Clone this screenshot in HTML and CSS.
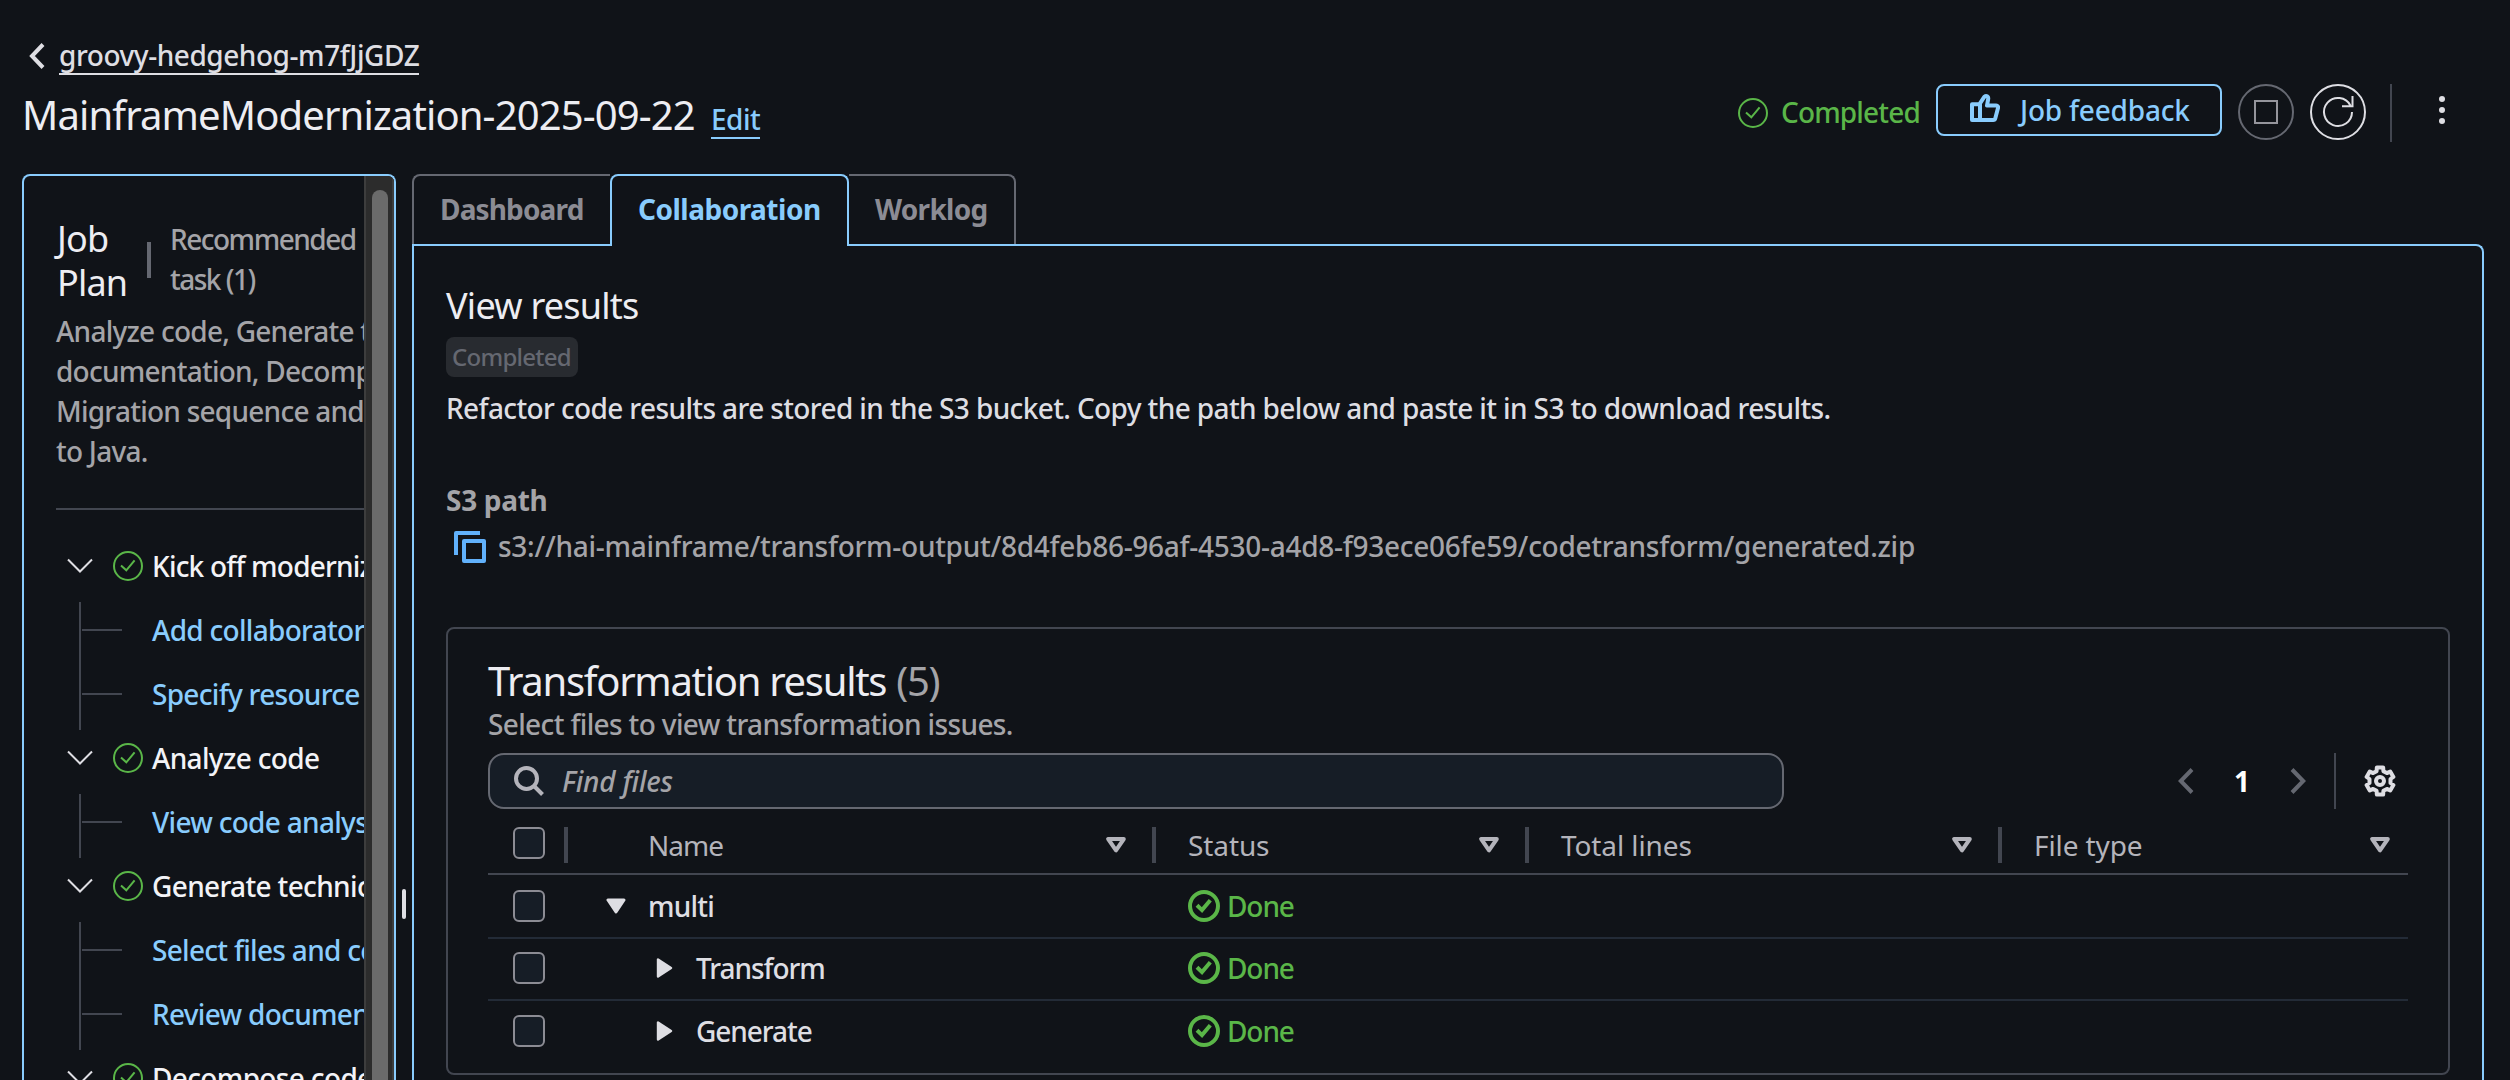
FILE: index.html
```
<!DOCTYPE html>
<html lang="en">
<head>
<meta charset="utf-8">
<title>MainframeModernization-2025-09-22</title>
<link rel="stylesheet" href="styles.css">
</head>
<body>
<svg class="defs" width="0" height="0">
  <symbol id="check-thin" viewBox="0 0 30 30"><circle cx="15" cy="15" r="14" fill="none" stroke="currentColor" stroke-width="2"/><path d="M8 14.5l5.3 4.8L21.6 9.3" fill="none" stroke="currentColor" stroke-width="2"/></symbol>
  <symbol id="check-bold" viewBox="0 0 32 32"><circle cx="16" cy="16" r="14" fill="none" stroke="currentColor" stroke-width="4"/><path d="M9 15.3l5 4.8L22.3 10.3" fill="none" stroke="currentColor" stroke-width="4"/></symbol>
  <symbol id="chevron-down" viewBox="0 0 26 16"><path d="M1 1.5L13 13.5L25 1.5" fill="none" stroke="currentColor" stroke-width="2"/></symbol>
  <symbol id="filter" viewBox="0 0 20 16"><path d="M2.2 2H17.8L10 13.4Z" fill="none" stroke="currentColor" stroke-width="4" stroke-linejoin="round"/></symbol>
  <symbol id="caret-down" viewBox="0 0 20 16"><path d="M2 2H18L10 14Z" fill="currentColor" stroke="currentColor" stroke-width="3" stroke-linejoin="round"/></symbol>
  <symbol id="caret-right" viewBox="0 0 18 20"><path d="M2 1.5V18.5L15 10Z" fill="currentColor" stroke="currentColor" stroke-width="2.4" stroke-linejoin="round"/></symbol>
</svg>

<header class="topbar">
  <div class="heading">
    <div class="crumb">
      <svg class="crumb-icon" viewBox="0 0 16 26"><path d="M14 1.5L3 13L14 24.5" fill="none" stroke="currentColor" stroke-width="4"/></svg>
      <a class="crumb-link">groovy-hedgehog-m7fJjGDZ</a>
    </div>
    <div class="title-row">
      <h1 class="title">MainframeModernization-2025-09-22</h1>
      <a class="edit">Edit</a>
    </div>
  </div>
  <div class="actions">
    <div class="job-status"><svg class="icon-30"><use href="#check-thin"/></svg><span>Completed</span></div>
    <button class="feedback">
      <svg class="thumb" viewBox="0 0 30 28"><path d="M2 26V10.2H9.5L14.3 2.8C16.4 1.2 18.6 2.4 18.2 4.8L17 11.6H26.2C27.7 11.6 28.4 12.8 28 14L25.3 24.2C25 25.4 24.4 26 23.2 26ZM10 10.2V26" fill="none" stroke="currentColor" stroke-width="4" stroke-linejoin="round"/></svg>
      <span>Job feedback</span>
    </button>
    <svg class="round stop" viewBox="0 0 56 56"><circle cx="28" cy="28" r="27" fill="none" stroke="#656871" stroke-width="2"/><rect x="17" y="17" width="22" height="22" fill="none" stroke="#95959c" stroke-width="2"/></svg>
    <svg class="round refresh" viewBox="0 0 56 56"><g fill="none" stroke="#dedee3" stroke-width="2"><circle cx="28" cy="28" r="27"/><path d="M42 28A14 14 0 1 1 40.4 21.5M42.5 12V22.2H32"/></g></svg>
    <span class="actions-divider"></span>
    <svg class="dots" viewBox="0 0 6 30"><g fill="#dedee3"><circle cx="3" cy="4" r="3"/><circle cx="3" cy="15" r="3"/><circle cx="3" cy="26" r="3"/></g></svg>
  </div>
</header>

<div class="workspace">
  <aside class="sidebar">
    <div class="plan">
      <div class="plan-head">
        <h2 class="plan-title">Job Plan</h2>
        <span class="plan-divider"></span>
        <span class="plan-rec">Recommended task (1)</span>
      </div>
      <p class="plan-desc">Analyze code, Generate technical<br>documentation, Decompose code,<br>Migration sequence and Refactor code<br>to Java.</p>
      <div class="plan-steps">
        <div class="step"><svg class="step-chev"><use href="#chevron-down"/></svg><svg class="icon-30 ok"><use href="#check-thin"/></svg><span class="step-name kick">Kick off modernization</span></div>
        <div class="substep"><span class="branch"></span><a>Add collaborators</a></div>
        <div class="substep"><span class="branch"></span><a>Specify resource location</a></div>
        <div class="step"><svg class="step-chev"><use href="#chevron-down"/></svg><svg class="icon-30 ok"><use href="#check-thin"/></svg><span class="step-name">Analyze code</span></div>
        <div class="substep"><span class="branch"></span><a>View code analysis</a></div>
        <div class="step"><svg class="step-chev"><use href="#chevron-down"/></svg><svg class="icon-30 ok"><use href="#check-thin"/></svg><span class="step-name">Generate technical</span></div>
        <div class="substep"><span class="branch"></span><a>Select files and configure</a></div>
        <div class="substep"><span class="branch"></span><a>Review documentation</a></div>
        <div class="step"><svg class="step-chev"><use href="#chevron-down"/></svg><svg class="icon-30 ok"><use href="#check-thin"/></svg><span class="step-name">Decompose code</span></div>
      </div>
    </div>
    <div class="scroll-track"><div class="scroll-thumb"></div></div>
  </aside>

  <div class="splitter"><span class="splitter-handle"></span></div>

  <main class="main">
    <nav class="tabs">
      <a class="tab tab-dashboard">Dashboard</a>
      <a class="tab tab-active">Collaboration</a>
      <a class="tab tab-worklog">Worklog</a>
    </nav>
    <section class="panel">
      <h2 class="panel-title">View results</h2>
      <span class="badge">Completed</span>
      <p class="note">Refactor code results are stored in the S3 bucket. Copy the path below and paste it in S3 to download results.</p>
      <h3 class="s3-label">S3 path</h3>
      <div class="s3-row">
        <svg class="copy" viewBox="0 0 32 32"><path d="M2 24V2H26" fill="none" stroke="#61b1fb" stroke-width="4" stroke-linejoin="round"/><rect x="10" y="10" width="20" height="20" fill="none" stroke="#61b1fb" stroke-width="4" stroke-linejoin="round"/></svg>
        <span class="s3-url">s3://hai-mainframe/transform-output/8d4feb86-96af-4530-a4d8-f93ece06fe59/codetransform/generated.zip</span>
      </div>

      <div class="results">
        <h2 class="results-title">Transformation results <span class="count">(5)</span></h2>
        <p class="results-desc">Select files to view transformation issues.</p>
        <div class="toolbar">
          <div class="search">
            <svg class="search-icon" viewBox="0 0 30 30"><circle cx="12.5" cy="12.5" r="10.5" fill="none" stroke="currentColor" stroke-width="4"/><path d="M20 20L28.5 28.5" stroke="currentColor" stroke-width="4"/></svg>
            <span>Find files</span>
          </div>
          <div class="pager">
            <svg class="pager-arrow" viewBox="0 0 16 26"><path d="M14 1.5L2.8 13L14 24.5" fill="none" stroke="currentColor" stroke-width="4"/></svg>
            <span class="pager-page">1</span>
            <svg class="pager-arrow" viewBox="0 0 16 26"><path d="M2 1.5L13.2 13L2 24.5" fill="none" stroke="currentColor" stroke-width="4"/></svg>
          </div>
          <span class="toolbar-divider"></span>
          <svg class="gear" viewBox="0 0 32 32"><g fill="none" stroke="currentColor" stroke-linejoin="round"><path stroke-width="4" d="M12.85 2.4H19.15L19.42 6.2L22.89 8.08L26.24 6.45L29.39 11.91L26.5 14V18L29.39 20.09L26.24 25.55L22.89 23.92L19.42 25.8L19.15 29.6H12.85L12.58 25.8L9.11 23.92L5.76 25.55L2.61 20.09L5.5 18V14L2.61 11.91L5.76 6.45L9.11 8.08L12.58 6.2Z"/><circle cx="16" cy="16" r="4" stroke-width="4"/></g></svg>
        </div>

        <div class="table">
          <div class="tr thead">
            <div class="th th-check"><span class="checkbox"></span></div>
            <div class="th th-name"><span>Name</span><svg class="filter"><use href="#filter"/></svg></div>
            <div class="th"><span>Status</span><svg class="filter"><use href="#filter"/></svg></div>
            <div class="th"><span>Total lines</span><svg class="filter"><use href="#filter"/></svg></div>
            <div class="th th-type"><span>File type</span><svg class="filter"><use href="#filter"/></svg></div>
          </div>
          <div class="tr row-first">
            <div class="cell-check"><span class="checkbox"></span></div>
            <div class="cell-name"><svg class="caret-down"><use href="#caret-down"/></svg><span class="multi">multi</span></div>
            <div class="cell-status"><svg class="icon-32"><use href="#check-bold"/></svg><span>Done</span></div>
          </div>
          <div class="tr">
            <div class="cell-check"><span class="checkbox"></span></div>
            <div class="cell-name nested"><svg class="caret-right"><use href="#caret-right"/></svg><span>Transform</span></div>
            <div class="cell-status"><svg class="icon-32"><use href="#check-bold"/></svg><span>Done</span></div>
          </div>
          <div class="tr row-last">
            <div class="cell-check"><span class="checkbox"></span></div>
            <div class="cell-name nested"><svg class="caret-right"><use href="#caret-right"/></svg><span>Generate</span></div>
            <div class="cell-status"><svg class="icon-32"><use href="#check-bold"/></svg><span>Done</span></div>
          </div>
        </div>
      </div>
    </section>
  </main>
</div>
</body>
</html>
```

FILE: styles.css
```
* { box-sizing: border-box; }
:root {
  --bg: #101318;
  --blue: #89ccfd;
  --green: #5ab648;
  --text: #dedee3;
  --bright: #ededf2;
  --muted: #a4a4a8;
  --line: #424650;
  --line-strong: #656871;
  --field: #161d26;
}
body {
  margin: 0;
  height: 1080px;
  overflow: hidden;
  display: flex;
  flex-direction: column;
  background: var(--bg);
  color: var(--text);
  font-family: "Noto Sans", "Open Sans", sans-serif;
  font-size: 28px;
  font-weight: 500;
  line-height: 40px;
  white-space: nowrap;
}
h1, h2, h3, p { margin: 0; font-weight: 400; }
svg { display: block; flex: none; }
.defs { position: absolute; }
.icon-30 { width: 30px; height: 30px; }
.icon-32 { width: 32px; height: 32px; }
.ok { color: var(--green); }

/* Top bar */
.topbar {
  height: 174px;
  flex: none;
  display: flex;
  justify-content: space-between;
  padding: 36px 65px 0 22px;
}
.crumb { display: flex; align-items: flex-start; gap: 14px; padding-left: 7px; }
.crumb-icon { width: 16px; height: 26px; margin-top: 7px; }
.crumb-link { padding-top: 1px; line-height: 36px; border-bottom: 2px solid var(--text); letter-spacing: -0.45px; }
.title-row { display: flex; align-items: baseline; margin-top: 16px; }
.title { width: 689px; font-size: 40px; line-height: 48px; letter-spacing: -0.87px; color: var(--bright); }
.edit { line-height: 36px; color: var(--blue); border-bottom: 2px solid var(--blue); letter-spacing: -0.5px; }
.actions { display: flex; align-items: flex-start; padding-top: 48px; }
.job-status {
  width: 198px;
  display: flex;
  align-items: center;
  gap: 13px;
  line-height: 56px;
  color: var(--green);
  letter-spacing: -0.85px;
}
.job-status .icon-30 { margin-top: 2px; }
.feedback {
  width: 286px;
  height: 52px;
  margin-right: 16px;
  padding: 0 0 0 32px;
  display: flex;
  align-items: center;
  gap: 20px;
  border: 2px solid var(--blue);
  border-radius: 8px;
  background: none;
  color: var(--blue);
  font: inherit;
  letter-spacing: -0.2px;
}
.thumb { width: 30px; height: 28px; margin-bottom: 4px; }
.round { width: 56px; height: 56px; }
.stop { margin-right: 16px; }
.actions-divider { width: 2px; height: 58px; margin: 0 47px 0 24px; background: var(--line); }
.dots { width: 6px; height: 30px; margin-top: 11px; }

/* Two-column workspace */
.workspace { flex: 1; min-height: 0; display: flex; padding: 0 26px 0 22px; }
.sidebar {
  width: 374px;
  flex: none;
  display: flex;
  overflow: hidden;
  border: 2px solid var(--blue);
  border-bottom: 0;
  border-radius: 8px 8px 0 0;
}
.plan { width: 340px; overflow: hidden; padding: 41px 0 0 32px; flex: none; }
.plan-head { display: flex; height: 94px; }
.plan-title { width: 91px; flex: none; font-size: 36px; line-height: 44px; padding-left: 1px; letter-spacing: -0.8px; white-space: normal; color: var(--bright); }
.plan-divider { width: 4px; height: 36px; flex: none; margin-top: 25px; background: var(--line-strong); }
.plan-rec { width: 200px; flex: none; margin: 2px 0 0 19px; white-space: normal; color: var(--muted); letter-spacing: -1.5px; }
.plan-desc { color: var(--muted); font-weight: 500; letter-spacing: -0.75px; height: 199px; border-bottom: 2px solid var(--line); }
.plan-steps { padding-top: 28px; }
.step { height: 64px; padding: 0 0 8px 11px; display: flex; align-items: center; color: #f3f3f7; letter-spacing: -0.65px; }
.step-chev { width: 26px; height: 16px; margin-right: 20px; color: var(--text); }
.step-name { margin-left: 9px; }
.kick { letter-spacing: -0.8px; }
.substep { height: 64px; margin-left: 23px; padding-bottom: 8px; display: flex; align-items: center; border-left: 2px solid var(--line); color: var(--blue); letter-spacing: -0.7px; }
.substep a { margin-left: 30px; }
.branch { flex: none; width: 40px; height: 2px; margin: 0 0 0 1px; background: var(--line); }
.scroll-track { width: 30px; flex: none; padding: 14px 4px 0 6px; background: #2c2c2c; border: solid #3d3d3d; border-width: 0 2px; }
.scroll-thumb { width: 16px; height: 1000px; border-radius: 8px 8px 0 0; background: #6b6b6b; }
.splitter { width: 16px; flex: none; padding: 715px 0 0 6px; }
.splitter-handle { display: block; width: 4px; height: 30px; border-radius: 2px; background: var(--text); }

/* Tabs and panel */
.main { flex: 1; min-width: 0; display: flex; flex-direction: column; }
.tabs { display: flex; margin-bottom: -2px; position: relative; font-weight: 700; line-height: 67px; color: #8c8c94; }
.tab { height: 70px; border-top: 2px solid var(--line-strong); }
.tab-dashboard { width: 198px; padding-left: 26px; border-left: 2px solid var(--line-strong); border-radius: 8px 0 0 0; letter-spacing: -0.85px; }
.tab-active { width: 239px; height: 72px; padding-left: 26px; border: 2px solid var(--blue); border-bottom: 0; border-radius: 8px 8px 0 0; background: var(--bg); color: var(--blue); letter-spacing: -0.5px; }
.tab-worklog { width: 167px; padding-left: 26px; border-right: 2px solid var(--line-strong); border-radius: 0 8px 0 0; letter-spacing: -0.7px; }
.panel { flex: 1; padding: 38px 32px 0; border: 2px solid var(--blue); border-bottom: 0; border-radius: 0 8px 0 0; }
.panel-title { font-size: 36px; line-height: 44px; letter-spacing: -0.75px; color: var(--bright); }
.badge { display: block; width: 132px; height: 40px; margin-top: 9px; padding-left: 6px; border-radius: 8px; background: #282b30; color: #656871; font-size: 24px; letter-spacing: -0.75px; }
.note { margin-top: 11px; font-weight: 500; letter-spacing: -0.62px; }
.s3-label { margin-top: 52px; font-size: 28px; font-weight: 700; letter-spacing: -0.3px; color: var(--muted); }
.s3-row { display: flex; margin-top: 6px; padding-left: 8px; gap: 12px; color: var(--muted); }
.copy { width: 32px; height: 32px; margin-top: 5px; }
.s3-url { letter-spacing: -0.27px; }

/* Results table */
.results { height: 448px; margin-top: 61px; padding: 28px 40px 0; border: 2px solid var(--line); border-radius: 8px; }
.results-title { font-size: 40px; line-height: 48px; letter-spacing: -1.3px; color: var(--bright); }
.count { color: var(--muted); margin-left: 1px; }
.results-desc { margin-top: -1px; color: var(--muted); font-weight: 500; letter-spacing: -0.64px; }
.toolbar { display: flex; align-items: center; height: 56px; margin-top: 9px; }
.search { width: 1296px; height: 56px; padding-left: 24px; display: flex; align-items: center; gap: 18px; border: 2px solid var(--line-strong); border-radius: 16px; background: var(--field); color: var(--muted); font-style: italic; letter-spacing: -0.2px; }
.search-icon { width: 30px; height: 30px; color: #b4b4bb; }
.pager { display: flex; align-items: center; margin-left: auto; color: var(--line-strong); }
.pager-arrow { width: 16px; height: 26px; }
.pager-page { width: 96px; text-align: center; font-weight: 700; color: #fff; }
.toolbar-divider { width: 2px; height: 56px; margin: 0 28px; background: var(--line); }
.gear { width: 32px; height: 32px; margin-right: 12px; color: var(--text); }
.tr { display: grid; grid-template-columns: 80px 588px 373px 473px 406px; align-items: center; height: 62px; padding-bottom: 2px; border-bottom: 2px solid #232b37; }
.thead { height: 66px; padding: 8px 0 0; border-color: var(--line); font-weight: 400; color: #b4b4bb; letter-spacing: -0.1px; }
.th { height: 36px; padding: 0 26px 0 32px; display: flex; align-items: center; justify-content: space-between; border-right: 4px solid var(--line); }
.th-check { padding: 0 0 4px 25px; }
.th-name { padding-left: 80px; letter-spacing: -1px; }
.th-type { padding-right: 18px; border-right: 0; }
.filter { width: 20px; height: 16px; }
.cell-check { padding-left: 25px; }
.checkbox { display: block; flex: none; width: 32px; height: 32px; border: 2px solid #8c8c94; border-radius: 6px; background: var(--field); }
.row-first { height: 64px; padding: 0; }
.row-last { border-bottom: 0; }
.cell-name { display: flex; align-items: center; padding-left: 38px; gap: 22px; letter-spacing: -1.05px; }
.multi { letter-spacing: -0.8px; }
.nested { padding-left: 88px; gap: 22px; }
.caret-down { width: 20px; height: 16px; }
.caret-right { width: 18px; height: 20px; }
.cell-status { display: flex; align-items: center; padding-left: 32px; gap: 7px; color: var(--green); letter-spacing: -1.1px; }
```
